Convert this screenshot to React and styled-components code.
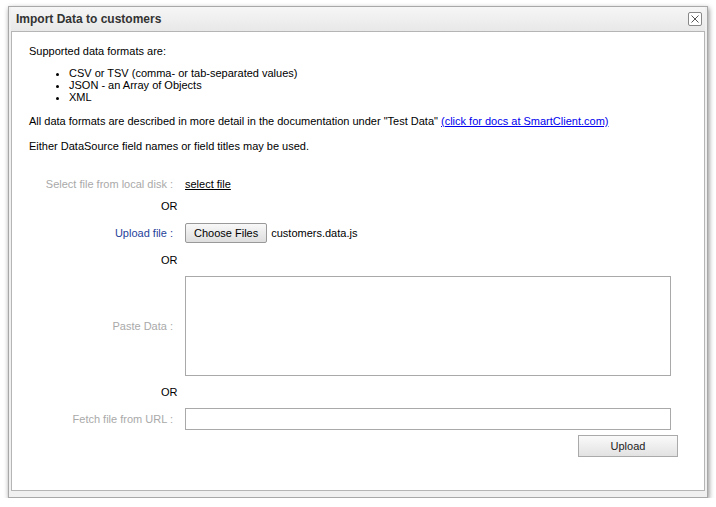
import React from "react";
import styled, { createGlobalStyle } from "styled-components";

const G = createGlobalStyle`
  body { margin: 0; background: #fff; font-family: "Liberation Sans", Arial, sans-serif; }
`;
const Win = styled.div`
  position: relative; margin: 6px 0 0 8px; width: 700px; height: 492px; box-sizing: border-box;
  background: #f0f0f0; border: 1px solid #a8a8a8; box-shadow: 1px 2px 5px rgba(0,0,0,0.45);
  display: flex; flex-direction: column; padding: 0 2px 6px 2px;
`;
const Header = styled.div`
  height: 24px; display: flex; align-items: center; justify-content: space-between;
  padding: 0 3px 0 5px; font-size: 12px; font-weight: bold; color: #333;
  background: linear-gradient(#f6f6f6, #e8e8e8);
`;
const Close = styled.div`
  width: 12px; height: 12px; border: 1px solid #888; border-radius: 2px; background: #fff;
  display: flex; align-items: center; justify-content: center;
`;
const Body = styled.div`
  flex: 1; background: #fff; border: 1px solid #b5b5b5; padding: 13px 0 0 17px;
  font-size: 11px; color: #000;
`;
const P = styled.p` margin: 0 0 ${p => p.mb || 12}px; line-height: 13px; `;
const UL = styled.ul` margin: 0 0 12px; padding-left: 40px; line-height: 12px; `;
const Form = styled.div`
  margin-top: 20px; display: grid; grid-template-columns: 144px 1fr; column-gap: 12px;
  align-items: center;
`;
const Label = styled.div`
  text-align: right; color: ${p => p.blue ? "#1f3f9a" : "#a9a9a9"}; height: ${p => p.h || 22}px;
  line-height: ${p => p.h || 22}px; font-size: 11px;
`;
const Or = styled.div`
  grid-column: 1 / span 2; padding-left: 132px; height: ${p => p.h}px; line-height: ${p => p.h}px;
  font-size: 11px; margin-bottom: ${p => p.mb || 0}px;
`;
const Link = styled.a` color: #000; text-decoration: underline; `;
const FileBtn = styled.button`
  font: 11px "Liberation Sans", Arial, sans-serif; height: 20px; padding: 0 8px; margin-right: 4px;
  border: 1px solid #999; border-radius: 2px; background: linear-gradient(#f8f8f8, #dedede);
`;
const TA = styled.div` width: 484px; height: 98px; border: 1px solid #a9a9a9; `;
const Input = styled.div` width: 484px; height: 20px; border: 1px solid #a9a9a9; `;
const Foot = styled.div` display: flex; justify-content: flex-end; padding: 5px 26px 0 0; `;
const UpBtn = styled.div`
  width: 98px; height: 20px; border: 1px solid #aaa; display: flex; align-items: center; justify-content: center;
  font-size: 11px; color: #222; background: linear-gradient(#fafafa, #e2e2e2);
`;

export default function App() {
  return (
    <>
      <G />
      <Win>
        <Header>
          Import Data to customers
          <Close>
            <svg width="10" height="10" viewBox="0 0 10 10"><path d="M1.5 1.5L8.5 8.5M8.5 1.5L1.5 8.5" stroke="#555" strokeWidth="1" /></svg>
          </Close>
        </Header>
        <Body>
          <P mb={9}>Supported data formats are:</P>
          <UL>
            <li>CSV or TSV (comma- or tab-separated values)</li>
            <li>JSON - an Array of Objects</li>
            <li>XML</li>
          </UL>
          <P>All data formats are described in more detail in the documentation under "Test Data" <a href="#" style={{ color: "#00e" }}>(click for docs at SmartClient.com)</a></P>
          <P>Either DataSource field names or field titles may be used.</P>
          <Form>
            <Label>Select file from local disk :</Label>
            <div><Link href="#">select file</Link></div>
            <Or h={22}>OR</Or>
            <Label blue h={32}>Upload file :</Label>
            <div><FileBtn>Choose Files</FileBtn>customers.data.js</div>
            <Or h={22} mb={5}>OR</Or>
            <Label h={100}>Paste Data :</Label>
            <TA />
            <Or h={32}>OR</Or>
            <Label>Fetch file from URL :</Label>
            <Input />
          </Form>
          <Foot><UpBtn>Upload</UpBtn></Foot>
        </Body>
      </Win>
    </>
  );
}
